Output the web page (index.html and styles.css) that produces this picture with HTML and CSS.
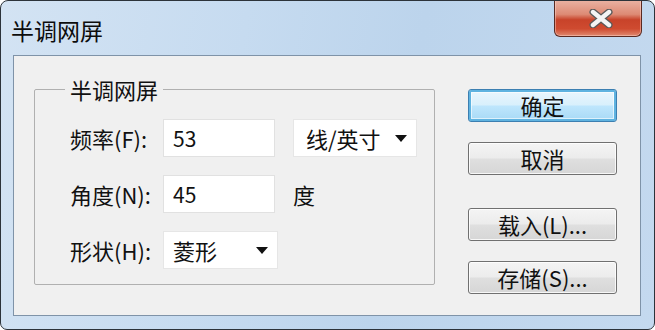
FILE: index.html
```html
<!DOCTYPE html>
<html lang="zh-CN">
<head>
	<meta charset="UTF-8">
	<title>半调网屏</title>
	<link rel="stylesheet" href="styles.css">
</head>
<body>
	<div class="window">
		<div class="titlebar">
			<span class="title">半调网屏</span>
			<button class="close" type="button">
				<svg width="24" height="19" viewBox="0 0 24 19">
					<path d="M4 3 L20 16 M20 3 L4 16" stroke="#5a5a5a" stroke-width="7" stroke-linecap="round"/>
					<path d="M4 3 L20 16 M20 3 L4 16" stroke="#f4f4f4" stroke-width="4.4" stroke-linecap="round"/>
				</svg>
			</button>
		</div>
		<div class="client">
			<fieldset class="group">
				<legend>半调网屏</legend>
				<div class="form">
					<label>频率(F):</label>
					<input class="field" type="text" value="53">
					<div class="select unit">线/英寸<i class="arrow"></i></div>

					<label>角度(N):</label>
					<input class="field" type="text" value="45">
					<span class="suffix">度</span>

					<label>形状(H):</label>
					<div class="select shape">菱形<i class="arrow"></i></div>
					<span></span>
				</div>
			</fieldset>
			<div class="actions">
				<div class="pair">
					<button class="btn default" type="button">确定</button>
					<button class="btn" type="button">取消</button>
				</div>
				<div class="pair">
					<button class="btn" type="button">载入(L)...</button>
					<button class="btn" type="button">存储(S)...</button>
				</div>
			</div>
		</div>
	</div>
</body>
</html>
```

FILE: styles.css
```css
*{box-sizing: border-box;}
html,body{margin:0;padding:0;background:#fff;}
body{font-family:"Noto Sans CJK SC","Noto Sans",sans-serif;color:#111;}
.window{
	width: 655px;
	height: 330px;
	border: 1px solid #2c333a;
	border-radius: 8px 8px 7px 7px;
	background: linear-gradient(100deg,#d3e3f3 0%,#c6dbf0 35%,#bcd4ec 60%,#c4d9ef 100%);
	display: flex;
	flex-direction: column;
	overflow: hidden;
}
.titlebar{
	height: 54px;
	display: flex;
	justify-content: space-between;
	align-items: flex-start;
	padding-left: 10px;
}
.title{
	font-size: 23px;
	line-height: 30px;
	margin-top: 14px;
	color: #0c0c0c;
}
.close{
	width: 88px;
	height: 37px;
	margin: -1px 12px 0 0;
	padding: 0;
	border: 1px solid #5a2a22;
	border-top: 0;
	border-radius: 0 0 6px 6px;
	background: linear-gradient(#eab3a4 0%,#dd8a74 40%,#c8432a 55%,#cf4b30 80%,#e08a70 100%);
	box-shadow: inset 0 0 0 1px rgba(255,220,210,.45);
	display: flex;
	align-items: center;
	justify-content: center;
}
.close svg{margin-left: 6px;}
.client{
	margin: 0 13px 0 12px;
	height: 261px;
	border: 1px solid #7f93a8;
	background: #f0f0f0;
	display: flex;
	padding: 19px 0 0 20px;
}
.group{
	width: 401px;
	height: 210px;
	margin: 0;
	padding: 0 0 0 35px;
	border: 1px solid #b0b0b0;
	border-radius: 2px;
}
.group legend{
	font-size: 22px;
	line-height: 28px;
	padding: 0 5px;
	margin-left: -5px;
}
.form{
	margin-top: 16px;
	display: grid;
	grid-template-columns: 93px 130px auto;
	grid-auto-rows: 38px;
	row-gap: 18px;
	align-items: center;
	font-size: 22px;
}
.form label{white-space: nowrap;}
.field{
	width: 112px;
	height: 38px;
	border: 1px solid #e1e1e1;
	background: #fff;
	font: inherit;
	font-size: 21px;
	color: #111;
	padding: 0 0 0 9px;
	outline: none;
}
.select{
	height: 38px;
	background: #fff;
	border: 1px solid #e6e6e6;
	display: flex;
	align-items: center;
	justify-content: space-between;
	padding: 0 9px 0 12px;
}
.unit{width: 124px;}
.shape{width: 115px;padding-left: 9px;}
.arrow{
	width: 0;
	height: 0;
	border-left: 6px solid transparent;
	border-right: 6px solid transparent;
	border-top: 7px solid #111;
}
.actions{
	margin: 14px 0 0 33px;
	display: flex;
	flex-direction: column;
	gap: 33px;
}
.pair{
	display: flex;
	flex-direction: column;
	gap: 20px;
}
.btn{
	width: 149px;
	height: 33px;
	padding: 0;
	border: 1px solid #707070;
	border-radius: 3px;
	background: linear-gradient(#f4f4f4 0%,#ececec 48%,#dfdfdf 52%,#d6d6d6 100%);
	box-shadow: inset 0 0 0 1px rgba(255,255,255,.8);
	font-family: inherit;
	font-size: 22px;
	line-height: 31px;
	color: #111;
}
.btn.default{
	border: 1px solid #3c7fb1;
	background: linear-gradient(#eaf6fd 0%,#d9f0fc 48%,#bee6fd 52%,#a7d9f5 100%);
	box-shadow: inset 0 0 0 2px #5fb3e0, inset 0 0 0 3px rgba(255,255,255,.6);
}
```
